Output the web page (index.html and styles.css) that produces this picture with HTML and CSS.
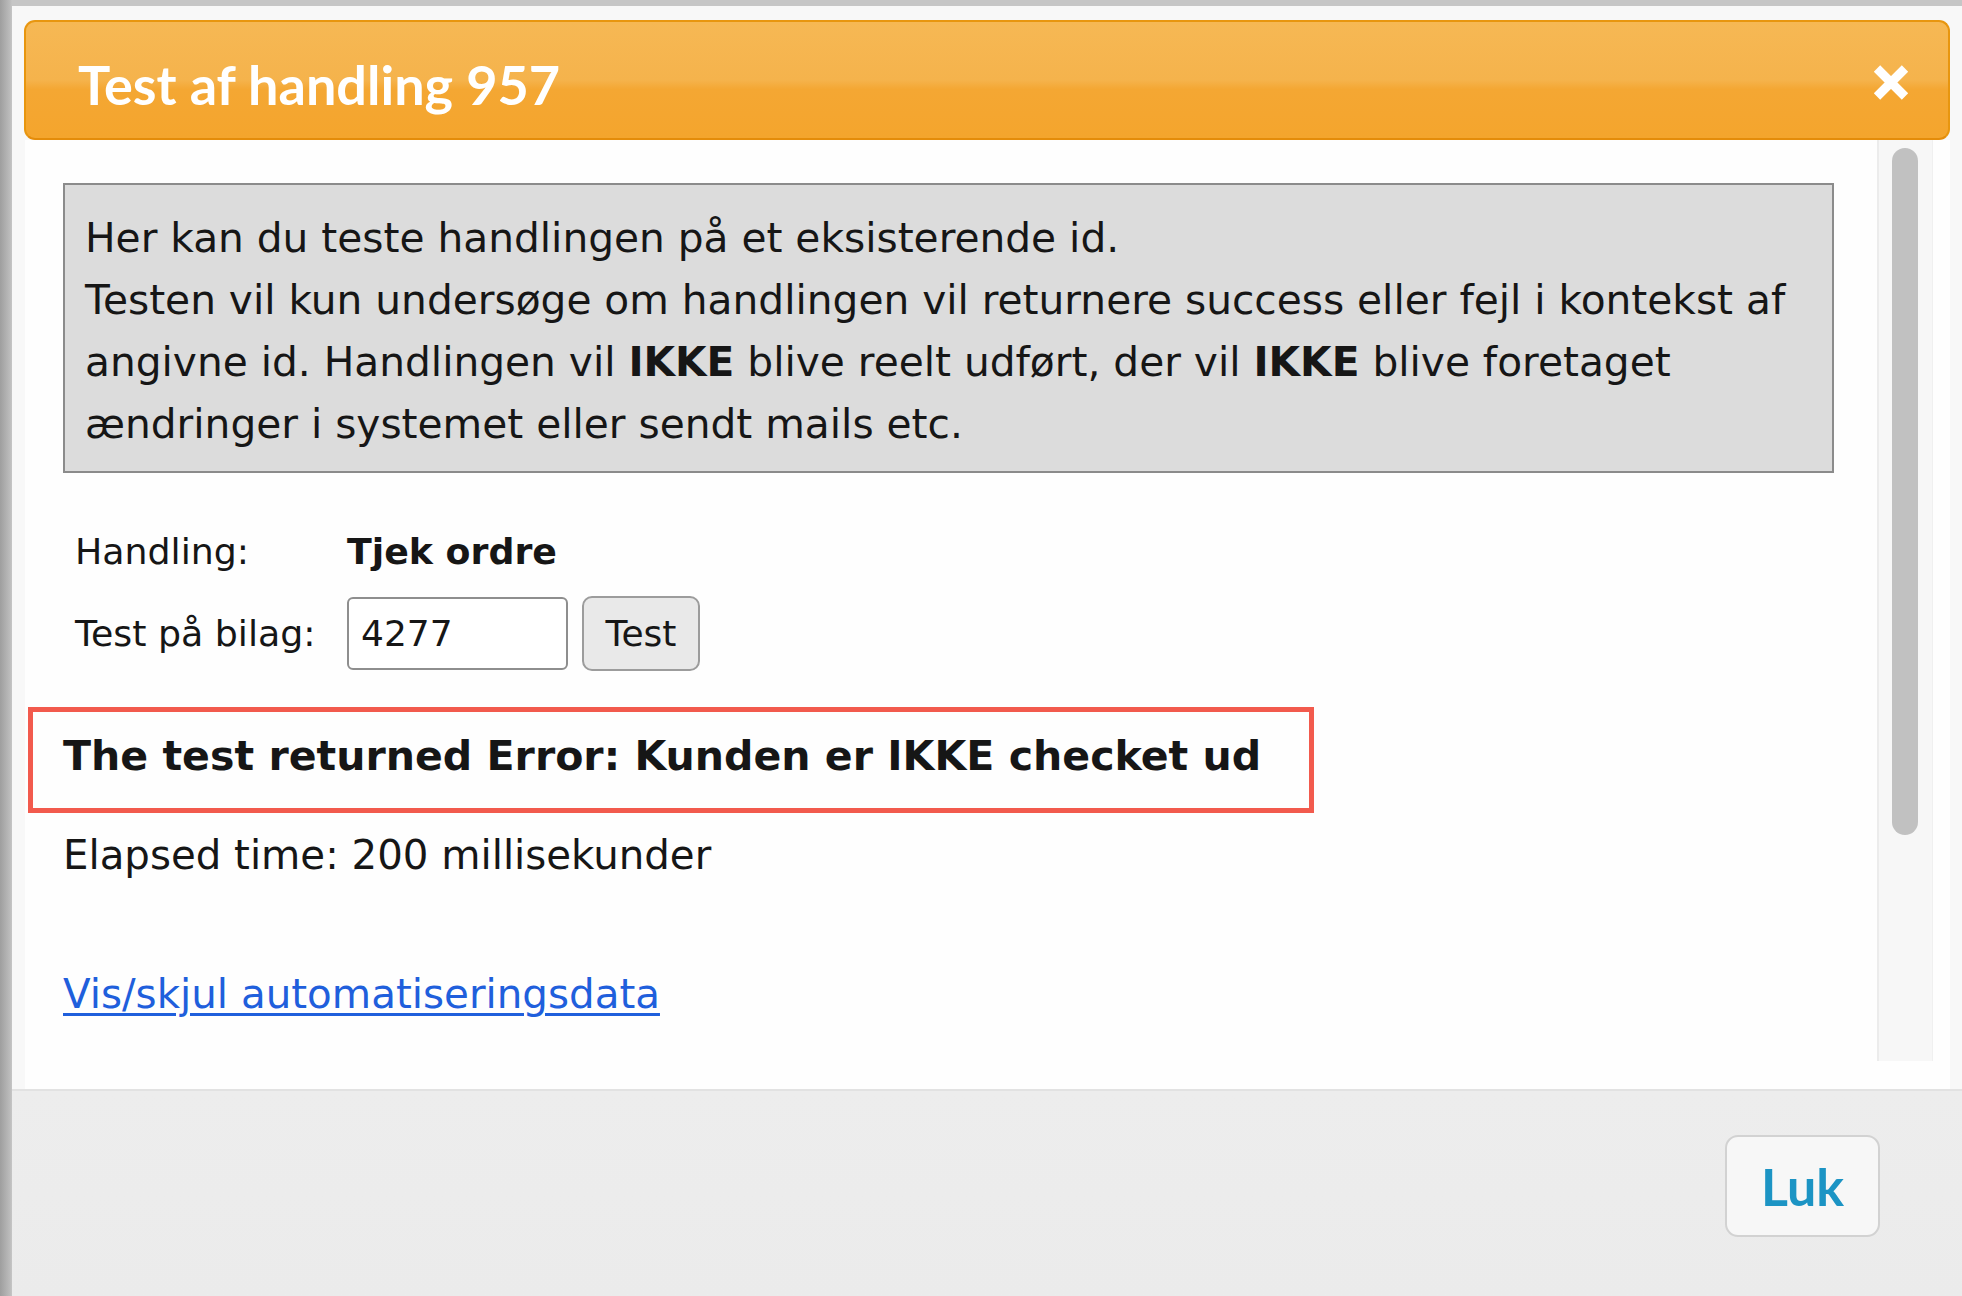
FILE: index.html
```html
<!DOCTYPE html>
<html lang="da">
<head>
<meta charset="utf-8">
<title>Test af handling 957</title>
<link rel="stylesheet" href="styles.css">
</head>
<body>
<div class="screen">
  <div class="dialog">
    <div class="titlebar">
      <span class="title">Test af handling 957</span>
      <span class="close" aria-label="Luk">
        <svg width="38" height="37" viewBox="0 0 38 37"><path d="M5 4.5 L33 32.5 M33 4.5 L5 32.5" stroke="#fff" stroke-width="9" stroke-linecap="butt"/></svg>
      </span>
    </div>
    <div class="content">
      <div class="main">
        <div class="info">Her kan du teste handlingen på et eksisterende id.<br>Testen vil kun undersøge om handlingen vil returnere success eller fejl i kontekst af<br>angivne id. Handlingen vil <b>IKKE</b> blive reelt udført, der vil <b>IKKE</b> blive foretaget<br>ændringer i systemet eller sendt mails etc.</div>
        <div class="form">
          <span class="label">Handling:</span>
          <span class="value">Tjek ordre</span>
          <span class="label">Test på bilag:</span>
          <span class="field"><input class="idinput" type="text" value="4277"><button class="testbtn">Test</button></span>
        </div>
        <div class="result">The test returned Error: Kunden er IKKE checket ud</div>
        <div class="elapsed">Elapsed time: 200 millisekunder</div>
        <div class="togglerow"><a class="toggle" href="#">Vis/skjul automatiseringsdata</a></div>
      </div>
      <div class="scrollbar"><div class="thumb"></div></div>
    </div>
    <div class="buttonpane"><button class="luk">Luk</button></div>
  </div>
</div>
</body>
</html>
```

FILE: styles.css
```css
html, body {
  margin: 0;
  padding: 0;
}
body {
  width: 1962px;
  height: 1296px;
  overflow: hidden;
  font-family: "DejaVu Sans", "Verdana", sans-serif;
  color: #161616;
}
.screen {
  box-sizing: border-box;
  width: 1962px;
  height: 1296px;
  padding: 6px 0 0 12px;
  background: linear-gradient(to right, #9e9e9e 0, #bcbcbc 10px, #c6c6c6 12px);
}
.dialog {
  box-sizing: border-box;
  height: 1290px;
  padding: 14px 12px 0 12px;
  background: #f8f8f8;
  display: flex;
  flex-direction: column;
}
.titlebar {
  box-sizing: border-box;
  height: 120px;
  flex: none;
  border: 2px solid #e8960f;
  border-bottom-color: #e48c0a;
  border-radius: 11px;
  background: linear-gradient(to bottom, #f6b854 0%, #f5b34c 50%, #f4a733 58%, #f4a52d 100%);
  display: flex;
  align-items: center;
  justify-content: space-between;
  padding: 8px 38px 0 52px;
}
.title {
  font-family: "Lato", "Open Sans", sans-serif;
  font-weight: 700;
  font-size: 54px;
  color: #ffffff;
}
.close {
  display: flex;
  width: 38px;
  height: 37px;
  margin-bottom: 4px;
}
.content {
  flex: none;
  height: 949px;
  margin-left: 1px;
  background: #fefefe;
  display: flex;
  align-items: flex-start;
}
.main {
  flex: 1;
  padding-left: 38px;
  font-size: 40px;
}
.info {
  box-sizing: border-box;
  width: 1771px;
  margin-top: 43px;
  height: 290px;
  border: 2px solid #8b8b8b;
  background: #dcdcdc;
  padding: 22px 0 0 20px;
  font-size: 40.7px;
  line-height: 62px;
  white-space: nowrap;
}
.info b {
  font-weight: 700;
}
.form {
  display: grid;
  grid-template-columns: 272px auto;
  row-gap: 13px;
  align-items: center;
  margin-top: 48px;
  padding-left: 12px;
  font-size: 36.3px;
  line-height: 62px;
}
.value {
  font-weight: 700;
}
.field {
  display: flex;
  align-items: center;
}
.idinput {
  box-sizing: border-box;
  width: 221px;
  height: 73px;
  border: 2px solid #8e8e8e;
  border-radius: 6px;
  padding: 0 0 0 12px;
  font-family: inherit;
  font-size: 36px;
  color: #161616;
  background: #fff;
  outline: none;
}
.testbtn {
  box-sizing: border-box;
  margin-left: 14px;
  width: 118px;
  height: 75px;
  border: 2px solid #9c9c9c;
  border-radius: 10px;
  background: #e9e9e9;
  font-family: inherit;
  font-size: 36px;
  color: #161616;
  padding: 0;
}
.result {
  box-sizing: border-box;
  width: 1286px;
  height: 106px;
  margin: 36px 0 0 -35px;
  border: 5px solid #f25a4d;
  padding: 0 0 8px 30px;
  display: flex;
  align-items: center;
  font-size: 41.1px;
  font-weight: 700;
  white-space: nowrap;
}
.elapsed {
  margin-top: 12px;
  font-size: 40.3px;
  line-height: 61px;
}
.togglerow {
  margin-top: 78px;
  font-size: 40.4px;
  line-height: 61px;
}
.toggle {
  color: #1f5fdc;
  text-decoration: underline;
  text-underline-offset: 5px;
  text-decoration-thickness: 3px;
}
.scrollbar {
  box-sizing: border-box;
  flex: none;
  width: 56px;
  height: 921px;
  margin-right: 17px;
  background: #f7f7f7;
  border-left: 2px solid #ececec;
  border-right: 1px solid #f0f0f0;
  padding: 8px 0 0 13px;
}
.thumb {
  width: 26px;
  height: 687px;
  border-radius: 13px;
  background: #c1c1c1;
}
.buttonpane {
  flex: 1;
  margin: 0 -12px;
  border-top: 2px solid #e2e2e2;
  background: linear-gradient(to bottom, #ededed, #ebebeb);
  display: flex;
  justify-content: flex-end;
  align-items: flex-start;
  padding: 44px 82px 0 0;
}
.luk {
  box-sizing: border-box;
  width: 155px;
  height: 102px;
  border: 2px solid #d2d2d2;
  border-radius: 13px;
  background: #f7f7f7;
  font-family: "Lato", "Open Sans", sans-serif;
  font-weight: 700;
  font-size: 52px;
  color: #1c94c4;
  padding: 0;
}
```
